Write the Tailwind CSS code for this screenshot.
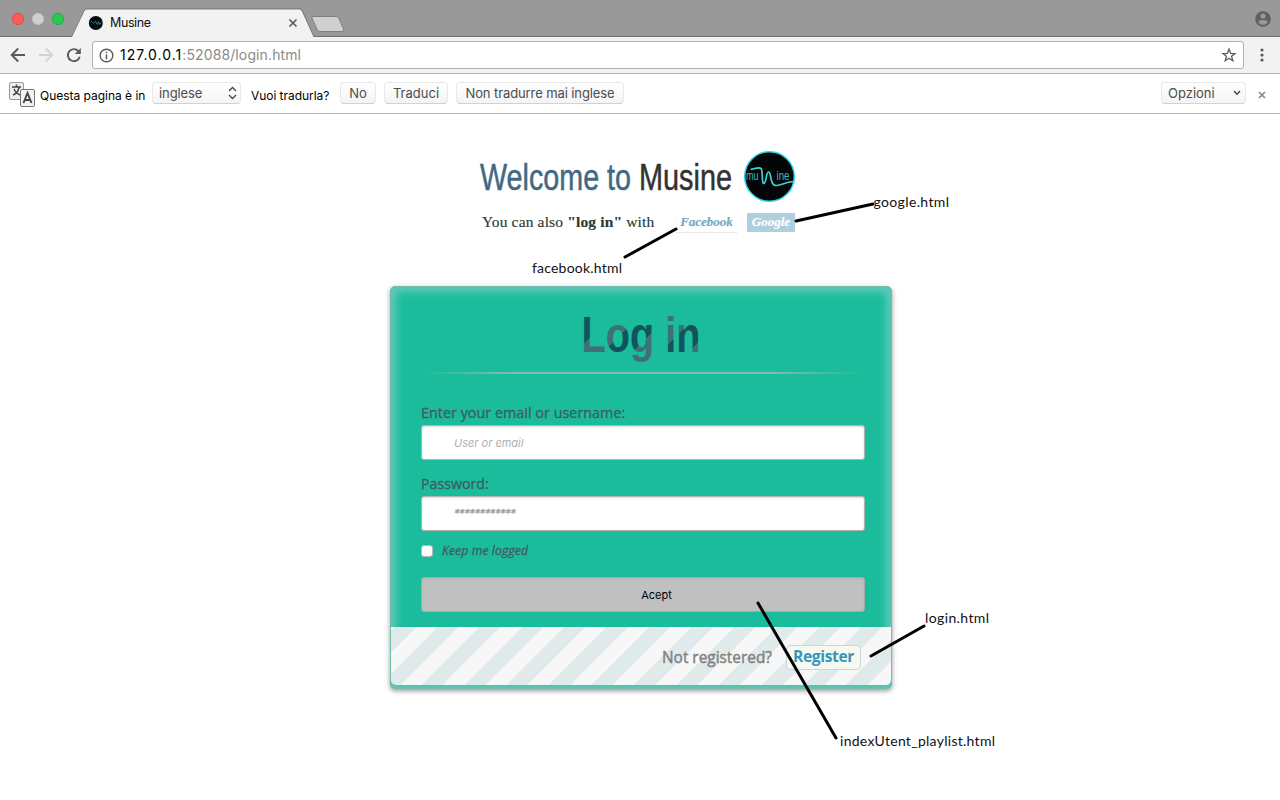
<!DOCTYPE html>
<html lang="it">
<head>
<meta charset="utf-8">
<title>Musine</title>
<script src="https://cdn.jsdelivr.net/npm/@tailwindcss/browser@4"></script>
</head>
<body class="relative h-[800px] w-[1280px] overflow-hidden bg-white font-[Inter,sans-serif] text-[13px] text-black">

<!-- Tab strip -->
<header class="h-[37px] bg-[#999999]">
  <svg class="block" width="1280" height="37" viewBox="0 0 1280 37">
    <path d="M0 36.5H72L84.500 10.500Q85 9 87 9H299Q301 9 302 10.500L313.500 36.500H1280" fill="none" stroke="#6f6f6f"/>
    <path d="M72 37L84.500 11Q85.300 9.500 87 9.500H299Q301 9.500 301.700 11L313.500 37Z" fill="#f2f2f2"/>
    <path d="M313 16.500H336Q338 16.500 338.800 18L343.500 29.500Q344 31.500 342 31.500H320Q318 31.500 317.300 30L312 18Q311.500 16.500 313 16.500Z" fill="#d0d0d0" stroke="#808080"/>
    <circle cx="18" cy="19" r="5.700" fill="#fc5b57" stroke="#e2463f" stroke-width=".8"/>
    <circle cx="38" cy="19" r="5.700" fill="#d0d0d0" stroke="#bcbcbc" stroke-width=".8"/>
    <circle cx="58" cy="19" r="5.700" fill="#27c950" stroke="#1aab3a" stroke-width=".8"/>
    <circle cx="95.800" cy="23" r="7" fill="#050a0c"/>
    <path d="M90.500 22.500q1-2 2 0t2 0q1-3 2 1l1 1 1-3 1 3 2-2" fill="none" stroke="#2a7f88" stroke-width="1"/>
    <text x="110" y="27" font-size="12.500" textLength="41" fill="#111">Musine</text>
    <path d="M289.500 19.500L296.500 26.500M296.500 19.500L289.500 26.500" stroke="#5c5c5c" stroke-width="1.700"/>
    <circle cx="1263" cy="19" r="7.800" fill="#606060"/>
    <circle cx="1263" cy="16" r="2.600" fill="#999"/>
    <path d="M1258.200 22.300Q1259 19.900 1263 19.900T1267.800 22.300Q1266 24.800 1263 24.800T1258.200 22.300Z" fill="#999"/>
  </svg>
</header>

<!-- Toolbar -->
<nav class="flex h-[37px] items-center border-b border-[#b4b4b4] bg-[#f2f2f2]">
  <svg width="92" height="36" viewBox="0 0 92 36" fill="none" stroke-width="1.900">
    <path d="M25 18H12M18.200 11.500L11.700 18L18.200 24.500" stroke="#5a5a5a"/>
    <path d="M39 18H52M45.800 11.500L52.300 18L45.800 24.500" stroke="#d4d4d4"/>
    <path d="M78.500 14.300A6 6 0 1 0 79.700 19.700" stroke="#5a5a5a"/>
    <path d="M80.800 11V17H74.800Z" fill="#5a5a5a"/>
  </svg>
  <div class="flex h-[28px] w-[1152px] items-center rounded-[3px] border border-[#b0b0b0] bg-white pl-[6px] pr-[6px]">
    <svg width="15" height="15" viewBox="0 0 15 15"><circle cx="7.500" cy="7.500" r="6.300" fill="none" stroke="#5a5a5a" stroke-width="1.400"/><path d="M7.500 6.500V11.300M7.500 3.700V5.300" stroke="#5a5a5a" stroke-width="1.500"/></svg>
    <span class="ml-[6px] -mt-px text-[14px] tracking-[0.12px] text-[#8a8a8a]"><span class="tracking-[1px] text-black">127.0.0.1</span>:52088/login.html</span>
    <svg class="ml-auto" width="16" height="16" viewBox="0 0 16 16"><path d="M8 2L9.600 6.300L14 6.500L10.600 9.300L11.800 13.700L8 11.200L4.200 13.700L5.400 9.300L2 6.500L6.400 6.300Z" fill="none" stroke="#5a5a5a" stroke-width="1.300"/></svg>
  </div>
  <svg class="ml-[14px]" width="8" height="18" viewBox="0 0 8 18" fill="#5a5a5a"><circle cx="4" cy="4" r="1.600"/><circle cx="4" cy="9" r="1.600"/><circle cx="4" cy="14" r="1.600"/></svg>
</nav>

<!-- Translate bar -->
<div class="flex h-[40px] items-start border-b border-[#b4b4b4] bg-white pl-[8px] pt-[7px]">
  <svg width="28" height="28" viewBox="0 0 28 28">
    <rect x="1.500" y="1.500" width="14" height="17" rx="1.500" fill="#eee" stroke="#999"/>
    <path d="M4 6H13M8.500 3.500V6M5 14Q10 12 11 6.500M6 8Q8 12.500 12.500 14" stroke="#444" stroke-width="1.500" fill="none"/>
    <rect x="12.500" y="8.500" width="14" height="17" rx="1.500" fill="#f2f2f2" stroke="#777"/>
    <path d="M15.500 22L19.500 12L23.500 22M17 19H22" stroke="#444" stroke-width="1.900" fill="none"/>
  </svg>
  <span class="ml-[4px] mt-[5px] w-[112px] whitespace-nowrap text-[12px] leading-[20px] tracking-[-0.02px]">Questa pagina è in</span>
  <div class="mt-[1px] flex h-[22px] w-[89px] items-center justify-between rounded border border-[#e8e8e8] border-b-[#d2d2d2] bg-linear-to-b from-white to-[#f4f4f4] pl-[6px] pr-[3px] text-[#4c4c4c]">
    <span class="mt-[2px] tracking-[-0.1px]">inglese</span>
    <svg width="9" height="14" viewBox="0 0 9 14" fill="none" stroke="#444" stroke-width="1.300"><path d="M1 5L4.500 1.500L8 5M1 9L4.500 12.500L8 9"/></svg>
  </div>
  <span class="ml-[10px] mt-[5px] w-[89px] whitespace-nowrap text-[12px] leading-[20px] tracking-[-0.05px]">Vuoi tradurla?</span>
  <div class="mt-[1px] flex gap-2 whitespace-nowrap text-[#4c4c4c]">
    <button class="h-[22px] w-[36px] rounded border border-[#e8e8e8] border-b-[#d2d2d2] bg-linear-to-b from-white to-[#f4f4f4] leading-[20px]">No</button>
    <button class="h-[22px] w-[64px] rounded border border-[#e8e8e8] border-b-[#d2d2d2] bg-linear-to-b from-white to-[#f4f4f4] leading-[20px]">Traduci</button>
    <button class="h-[22px] w-[168px] rounded border border-[#e8e8e8] border-b-[#d2d2d2] bg-linear-to-b from-white to-[#f4f4f4] leading-[20px] tracking-[-0.1px]">Non tradurre mai inglese</button>
  </div>
  <div class="ml-auto mt-[1px] flex h-[22px] w-[85px] items-center justify-between rounded border border-[#e8e8e8] border-b-[#d2d2d2] bg-linear-to-b from-white to-[#f4f4f4] pl-[6px] pr-[4px] text-[#4c4c4c]">
    <span class="mt-[2px]">Opzioni</span>
    <svg width="8" height="6" viewBox="0 0 8 6" fill="none" stroke="#444" stroke-width="1.400"><path d="M1 1L4 4.200L7 1"/></svg>
  </div>
  <svg class="ml-[12px] mr-[14px] mt-[10px]" width="8" height="8" viewBox="0 0 8 8"><path d="M1 1L7 7M7 1L1 7" stroke="#858585" stroke-width="1.600"/></svg>
</div>

<!-- Page -->
<main class="flex flex-col items-center">
  <div class="flex h-[98px] w-[322px] flex-col pt-[36px]">
    <svg class="block shrink-0" width="322" height="54" viewBox="0 0 322 54" font-family="Liberation Sans, sans-serif">
      <text x="1" y="39.500" font-size="36" textLength="151" lengthAdjust="spacingAndGlyphs" fill="#3f6a82" stroke="#3f6a82" stroke-width=".5">Welcome to</text>
      <text x="160" y="39.500" font-size="36" textLength="93" lengthAdjust="spacingAndGlyphs" fill="#333" stroke="#333" stroke-width=".5">Musine</text>
      <circle cx="290.500" cy="26.500" r="24.800" fill="#020606" stroke="#2fd3dc" stroke-width="1.500"/>
      <g fill="#36b9c2" font-size="12.500"><text x="267" y="30" textLength="12.500" lengthAdjust="spacingAndGlyphs">mu</text><text x="297.500" y="30" textLength="13" lengthAdjust="spacingAndGlyphs">ine</text></g>
      <path d="M271.500 19.500Q280 17 282 18.500C284 20 282.500 34 285 33.500C287.500 33 287 22 289.500 22C293 22 290 36 298 35.500C303 35 306 32 314.500 31.500" fill="none" stroke="#42cfd8" stroke-width="1.700"/>
    </svg>
  </div>
  <div class="flex h-[20px] w-[316px] items-center whitespace-nowrap font-['Liberation_Serif',serif] text-[15.5px] leading-[20px] text-[#2c3a34] [-webkit-text-stroke:0.15px]">
    <span class="w-[194px] tracking-[0.15px]">You can also <b>"log in"</b> with</span>
    <span class="flex h-[20px] w-[61px] items-center justify-center bg-white text-[13px] font-bold italic text-[#6faabf] shadow-[0_1px_1px_#ece6e6]">Facebook</span>
    <span class="ml-[10px] flex h-[19px] w-[48px] items-center justify-center bg-[#aed0de] text-[13px] font-bold italic text-white">Google</span>
  </div>

  <section class="mt-[54px] ml-[2px] flex h-[403px] w-[502px] flex-col rounded-[5px] border border-[#70bdaf] bg-[#1abc9c] font-['Open_Sans',sans-serif] text-[#405c60] shadow-[0_2px_5px_rgba(105,108,109,0.7),inset_0_0_8px_5px_rgba(208,223,226,0.4)]">
    <div class="flex h-[340px] flex-col pl-[30px] pr-[26px] pt-[22px]">
      <svg class="ml-[155px] block shrink-0 overflow-visible" width="130" height="63" viewBox="576 309 130 63" font-family="Liberation Sans, sans-serif">
        <defs>
          <linearGradient id="bands" gradientUnits="userSpaceOnUse" spreadMethod="repeat" x1="585" y1="314.300" x2="613.300" y2="342.600">
            <stop offset="0" stop-color="#12535d"/><stop offset=".5" stop-color="#12535d"/>
            <stop offset=".5" stop-color="#406f76"/><stop offset="1" stop-color="#406f76"/>
          </linearGradient>
        </defs>
        <text x="581.500" y="352" font-size="50" font-weight="700" textLength="119" lengthAdjust="spacingAndGlyphs" fill="url(#bands)">Log in</text>
      </svg>
      <div class="h-[2px] w-full shrink-0 bg-[linear-gradient(90deg,transparent_0%,#84b9b3_20%,#84b9b3_79%,transparent_100%)]"></div>
      <label class="mt-[27px] block h-[24px] text-[14.4px] leading-[24px] [-webkit-text-stroke:0.3px]">Enter your email or username:</label>
      <div class="flex h-[35px] shrink-0 items-center rounded-[3px] border border-[#b2b2b2] bg-white pl-[32px] pt-[2px] font-[Inter,sans-serif] text-[11px] italic text-[#b0b0b0] shadow-[inset_0_1px_2px_rgba(168,168,168,0.4)]">User or email</div>
      <label class="mt-[12px] block h-[24px] text-[14.2px] leading-[24px] [-webkit-text-stroke:0.3px]">Password:</label>
      <div class="flex h-[35px] shrink-0 items-center rounded-[3px] border border-[#b2b2b2] bg-white pl-[32px] font-[Inter,sans-serif] text-[11px] italic tracking-[-0.4px] text-[#a0a0a0] shadow-[inset_0_1px_2px_rgba(168,168,168,0.4)] [-webkit-text-stroke:0.4px]">************</div>
      <div class="mt-[10px] flex h-[20px] items-center">
        <span class="h-[12px] w-[12px] rounded-[3px] border border-[#b8b8b8] bg-white"></span>
        <span class="ml-[9px] text-[12.2px] italic tracking-[0.1px] [-webkit-text-stroke:0.3px]">Keep me logged</span>
      </div>
      <button class="mt-[16px] h-[35px] shrink-0 rounded-[3px] border border-[#a8a8a8] bg-[#c0c0c0] pl-[27px] pt-[2px] font-[Inter,sans-serif] text-[11px] text-black shadow-[inset_0_1px_2px_rgba(168,168,168,0.4)]">Acept</button>
    </div>
    <div class="flex h-[58px] items-center justify-end rounded-b-[5px] bg-[repeating-linear-gradient(135deg,#f7f7f7_0px,#f7f7f7_2.7px,#e1eaeb_2.7px,#e1eaeb_17.7px,#f7f7f7_17.7px,#f7f7f7_30px)] pr-[30px] pt-[2px] text-[15.4px] text-[#7f7f7f]">
      <span class="mt-[2px] [-webkit-text-stroke:0.4px]">Not registered?</span>
      <span class="ml-[14px] flex h-[25px] w-[75px] items-center justify-center rounded border border-[#cbd5d6] bg-[#f7f8f1] text-[15.6px] font-bold tracking-[-0.35px] text-[#3397b9]">Register</span>
    </div>
    <div class="h-[3px] shrink-0"></div>
  </section>
</main>

<!-- Link annotations drawn over the page -->
<svg class="absolute left-0 top-0" width="1280" height="800" viewBox="0 0 1280 800" font-family="Lato, sans-serif" font-size="14" fill="#111">
  <g stroke="#000" stroke-width="3" stroke-linecap="round">
    <path d="M625 257L676 229M796 221L873 204M871 656L924 626M758 603L836 738"/>
  </g>
  <text x="532" y="273" textLength="90">facebook.html</text>
  <text x="873.500" y="207" textLength="75.500">google.html</text>
  <text x="925" y="623" textLength="64">login.html</text>
  <text x="840" y="746" textLength="155">indexUtent_playlist.html</text>
</svg>
</body>
</html>
